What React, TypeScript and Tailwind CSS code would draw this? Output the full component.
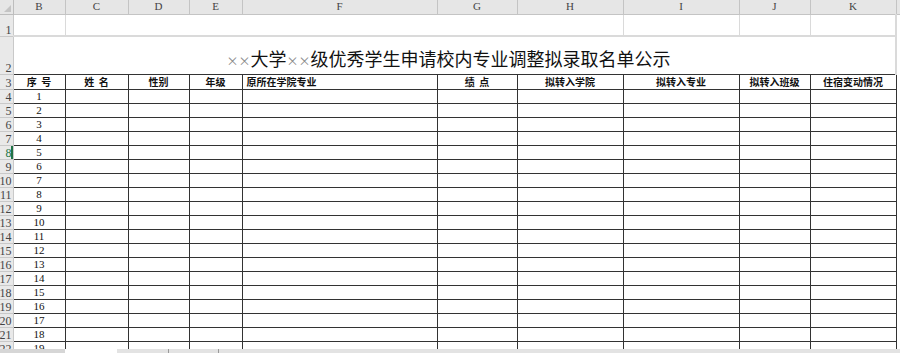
import React from "react";

const cols = [
  { key: "B", w: "w-[52px]" },
  { key: "C", w: "w-[63px]" },
  { key: "D", w: "w-[61px]" },
  { key: "E", w: "w-[53px]" },
  { key: "F", w: "w-[195px]" },
  { key: "G", w: "w-[80px]" },
  { key: "H", w: "w-[106px]" },
  { key: "I", w: "w-[116px]" },
  { key: "J", w: "w-[71px]" },
  { key: "K", w: "w-[86px]" },
];

const heads = [
  { text: "序\u00a0\u00a0号", align: "text-center" },
  { text: "姓\u00a0\u00a0名", align: "text-center" },
  { text: "性别", align: "text-center" },
  { text: "年级", align: "text-center" },
  { text: "原所在学院专业", align: "text-left pl-[4px]" },
  { text: "绩\u00a0\u00a0点", align: "text-center" },
  { text: "拟转入学院", align: "text-center" },
  { text: "拟转入专业", align: "text-center" },
  { text: "拟转入班级", align: "text-center" },
  { text: "住宿变动情况", align: "text-center" },
];

const serif = "font-['Liberation_Serif','DejaVu_Serif',serif]";
const cjk = "font-['Noto_Sans_CJK_SC',sans-serif]";

function RowHead({ n, active }: { n: number; active?: boolean }) {
  return (
    <td
      className={`p-0 bg-[#e9e9e9] border-r border-b border-[#c9c9c9] ${serif} text-[12px] leading-[11px] align-bottom ${
        active ? "text-[#217346] shadow-[inset_-2px_0_0_#217346]" : "text-[#444]"
      }`}
    >
      <div className="flex items-end justify-end overflow-hidden pr-[1px]">
        <span className="whitespace-nowrap">{n}</span>
      </div>
    </td>
  );
}

export default function App() {
  const dataRows = Array.from({ length: 19 }, (_, i) => i + 1);

  return (
    <div className="w-[900px] h-[353px] bg-white overflow-hidden flex flex-col">
      <div className="h-[349px] overflow-hidden">
        <table className="border-collapse table-fixed w-[900px]">
          <colgroup>
            <col className="w-[13px]" />
            {cols.map((c) => (
              <col key={c.key} className={c.w} />
            ))}
            <col className="w-[4px]" />
          </colgroup>
          <tbody>
            <tr className="h-[14px]">
              <td className="p-0 bg-[#e6e6e6] border-r border-b border-[#bdbdbd] relative">
                <div className="absolute right-[2px] bottom-[2px] w-0 h-0 border-l-[7px] border-l-transparent border-b-[7px] border-b-[#c4c4c4]" />
              </td>
              {cols.map((c) => (
                <td
                  key={c.key}
                  className={`p-0 bg-[#e6e6e6] border-r border-b border-[#c4c4c4] text-center text-[11px] leading-none text-[#444] ${serif}`}
                >
                  {c.key}
                </td>
              ))}
              <td className="p-0 bg-[#e6e6e6] border-b border-[#c4c4c4]" />
            </tr>

            <tr className="h-[22px]">
              <RowHead n={1} />
              <td className="p-0 border-r border-b-2 border-[#dadada]" />
              <td colSpan={6} className="p-0 border-r border-b-2 border-[#dadada]" />
              <td className="p-0 border-r border-b-2 border-[#dadada]" />
              <td className="p-0 border-r border-b-2 border-[#dadada]" />
              <td className="p-0 border-r-2 border-b-2 border-[#dadada]" />
              <td className="p-0" />
            </tr>

            <tr className="h-[38px]">
              <RowHead n={2} />
              <td colSpan={10} className="p-0 border-r-2 border-[#dadada] align-bottom">
                <div className={`pl-[213px] pb-[7px] whitespace-nowrap text-[18px] leading-none text-[#111] ${cjk}`}>
                  <span className="text-[12px] text-[#888]">××</span>大学
                  <span className="text-[12px] text-[#888]">××</span>级优秀学生申请校内专业调整拟录取名单公示
                </div>
              </td>
              <td className="p-0" />
            </tr>

            <tr className="h-[15px]">
              <RowHead n={3} />
              {heads.map((h, i) => (
                <td
                  key={i}
                  className={`p-0 border border-[#333] text-[10px] leading-none font-bold text-[#111] whitespace-nowrap ${h.align} ${cjk}`}
                >
                  {h.text}
                </td>
              ))}
              <td className="p-0 border-l border-[#333]" />
            </tr>

            {dataRows.map((n) => (
              <tr key={n} className="h-[14px]">
                <RowHead n={n + 3} active={n + 3 === 8} />
                <td className={`p-0 border border-[#333] text-center text-[11px] leading-[10px] text-[#111] ${serif}`}>
                  {n}
                </td>
                {cols.slice(1).map((c) => (
                  <td key={c.key} className="p-0 border border-[#333]" />
                ))}
                <td className="p-0 border-l border-[#333]" />
              </tr>
            ))}
          </tbody>
        </table>
      </div>
      <div className="flex h-[4px]">
        <div className="w-[65px] bg-[#d6d6d6]" />
        <div className="w-[52px] bg-white" />
        <div className="flex-1 bg-[#e3e3e3] flex">
          <div className="w-[51px]" />
          <div className="w-[1px] bg-[#9a9a9a]" />
          <div className="w-[49px]" />
          <div className="w-[1px] bg-[#9a9a9a]" />
        </div>
      </div>
    </div>
  );
}
